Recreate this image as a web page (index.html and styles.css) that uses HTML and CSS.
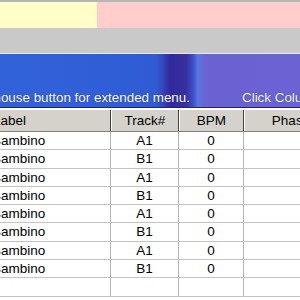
FILE: index.html
```html
<!DOCTYPE html>
<html>
<head>
<meta charset="utf-8">
<link rel="stylesheet" href="styles.css">
</head>
<body>
<div class="screen">
  <div class="topline"></div>
  <div class="colorbar">
    <div class="swatch yellow"></div>
    <div class="swatch pink"></div>
  </div>
  <div class="toolbar"></div>
  <div class="banner">
    <div class="hint-left"><span>Use right mouse button for extended menu.</span></div>
    <div class="hint-right">Click Column headers to sort.</div>
  </div>
  <div class="grid">
    <div class="row head">
      <div class="cell left">Label</div>
      <div class="cell">Track#</div>
      <div class="cell">BPM</div>
      <div class="cell">Phase</div>
    </div>
    <div class="row"><div class="cell left">Bambino</div><div class="cell">A1</div><div class="cell">0</div><div class="cell"></div></div>
    <div class="row"><div class="cell left">Bambino</div><div class="cell">B1</div><div class="cell">0</div><div class="cell"></div></div>
    <div class="row"><div class="cell left">Bambino</div><div class="cell">A1</div><div class="cell">0</div><div class="cell"></div></div>
    <div class="row"><div class="cell left">Bambino</div><div class="cell">B1</div><div class="cell">0</div><div class="cell"></div></div>
    <div class="row"><div class="cell left">Bambino</div><div class="cell">A1</div><div class="cell">0</div><div class="cell"></div></div>
    <div class="row"><div class="cell left">Bambino</div><div class="cell">B1</div><div class="cell">0</div><div class="cell"></div></div>
    <div class="row"><div class="cell left">Bambino</div><div class="cell">A1</div><div class="cell">0</div><div class="cell"></div></div>
    <div class="row"><div class="cell left">Bambino</div><div class="cell">B1</div><div class="cell">0</div><div class="cell"></div></div>
    <div class="row"><div class="cell left"></div><div class="cell"></div><div class="cell"></div><div class="cell"></div></div>
  </div>
</div>
</body>
</html>
```
FILE: styles.css
```css
html, body {
  margin: 0;
  padding: 0;
}
body {
  width: 300px;
  height: 300px;
  overflow: hidden;
  background: #c9c9c9;
  font-family: "Liberation Sans", Arial, sans-serif;
  font-size: 13.5px;
  color: #000;
}
.screen {
  width: 300px;
  height: 300px;
  overflow: hidden;
  display: flex;
  flex-direction: column;
}
.topline {
  height: 2px;
  background: #b6b6b6;
  flex: none;
}
.colorbar {
  display: flex;
  height: 26px;
  flex: none;
}
.swatch.yellow {
  width: 97px;
  background: #fffec9;
}
.swatch.pink {
  flex: 1;
  background: #ffcdcb;
}
.toolbar {
  height: 25px;
  flex: none;
  background: #c9c9c9;
}
.banner {
  height: 55px;
  flex: none;
  box-sizing: border-box;
  border-top: 1px solid #e4ebf6;
  border-bottom: 1px solid #23246a;
  background: linear-gradient(90deg, #3262da 0px, #2f5cd4 156px, #3545ba 163px, #30299c 170px, #3a2f9e 186px, #3b4fc8 193px, #5a78e0 198px, #6a62d2 205px, #6b62d4 300px);
  display: flex;
  align-items: flex-end;
  padding-bottom: 2px;
  font-size: 13.4px;
  color: #fff;
  white-space: nowrap;
  text-shadow: 0 0 1px #1b2478;
}
.hint-left {
  width: 190px;
  flex: none;
  display: flex;
  justify-content: flex-end;
  overflow: hidden;
}
.hint-right {
  margin-left: 52px;
  flex: none;
}
.grid {
  margin-left: -9px;
  width: 347px;
  background: #fff;
  flex: 1;
}
.row {
  display: grid;
  grid-template-columns: 120px 68px 65px 94px;
  height: 18.3px;
  box-sizing: border-box;
  border-bottom: 1px solid #c4c4c4;
}
.cell {
  box-sizing: border-box;
  border-right: 1px solid #b4b4b4;
  text-align: center;
  line-height: 17px;
  white-space: nowrap;
  overflow: hidden;
}
.cell.left {
  text-align: left;
  padding-left: 1px;
}
.row.head {
  height: 24px;
  background: #d5d2cc;
  border-top: 2px solid #ffffff;
  border-bottom: 1px solid #808080;
}
.row.head .cell {
  line-height: 21px;
  border-left: 1px solid #ffffff;
  border-right: 1px solid #404040;
}
```
